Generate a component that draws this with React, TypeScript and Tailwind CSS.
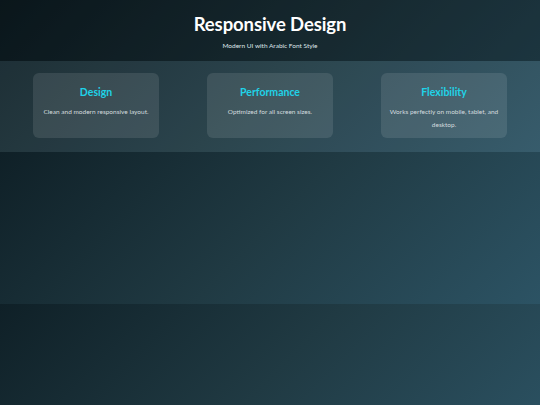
const features = [
  { title: 'Design', text: 'Clean and modern responsive layout.' },
  { title: 'Performance', text: 'Optimized for all screen sizes.' },
  { title: 'Flexibility', text: 'Works perfectly on mobile, tablet, and desktop.' },
];

export default function App() {
  return (
    <div className="min-h-screen bg-[linear-gradient(135deg,#0f2027,#203a43,#2c5364)] bg-[length:100%_152px] bg-repeat font-['Lato','Noto_Sans',sans-serif] text-white">
      {/* Header */}
      <header className="h-[61px] bg-black/30 flex flex-col items-center pt-[13px]">
        <h1 className="text-[18.5px] leading-[23px] font-bold tracking-[-0.1px]">Responsive Design</h1>
        <p className="mt-[5px] text-[6.5px] leading-[10px] text-[#dfe6ea]">Modern UI with Arabic Font Style</p>
      </header>

      {/* Features */}
      <section className="h-[91px] bg-white/5 px-[33px] pt-[12px] grid grid-cols-3 gap-[48px]">
        {features.map((f) => (
          <div key={f.title} className="h-[65px] rounded-[6px] bg-white/10 px-[8px] pt-[12px] text-center">
            <h2 className="text-[10.5px] leading-[14px] font-bold text-[#1fd3e8]">{f.title}</h2>
            <p className="mt-[6px] text-[6.5px] leading-[13px] text-[#d3dbdf]">{f.text}</p>
          </div>
        ))}
      </section>
    </div>
  );
}
